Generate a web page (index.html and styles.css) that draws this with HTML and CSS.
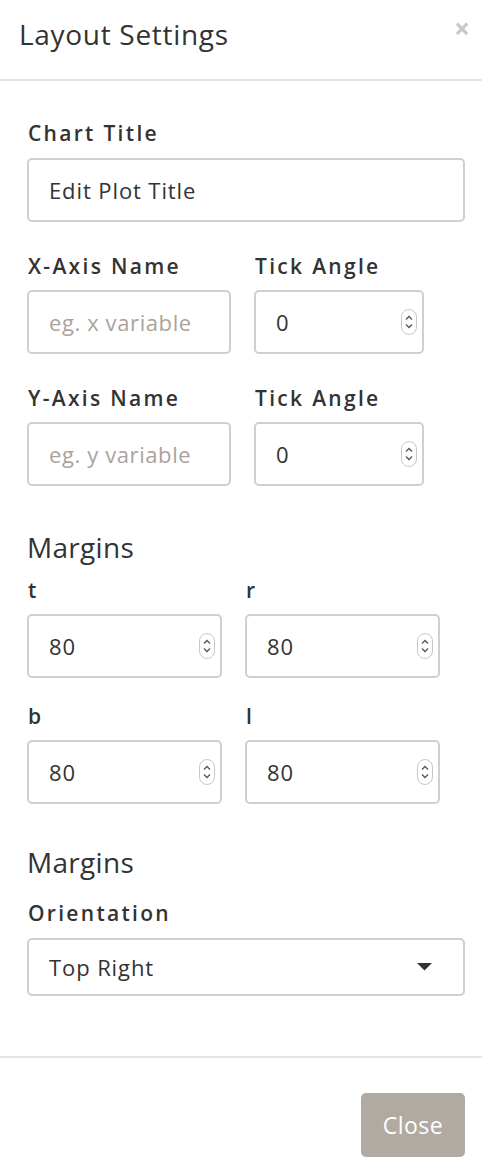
FILE: index.html
```html
<!DOCTYPE html>
<html>
<head>
<meta charset="utf-8">
<link rel="stylesheet" href="styles.css">
</head>
<body>
<div class="modal">
  <div class="header">
    <h1 class="title">Layout Settings</h1>
    <span class="close-x">&times;</span>
  </div>
  <div class="body">
    <div class="group">
      <label class="label">Chart Title</label>
      <div class="box"><span class="value">Edit Plot Title</span></div>
    </div>

    <div class="row">
      <div class="group col-name">
        <label class="label">X-Axis Name</label>
        <div class="box"><span class="placeholder">eg. x variable</span></div>
      </div>
      <div class="group col-angle">
        <label class="label">Tick Angle</label>
        <div class="box num"><span class="value">0</span>
          <svg class="spin" width="16" height="26" viewBox="0 0 16 26"><rect x="0.5" y="0.5" width="15" height="25" rx="7.5" fill="#fff" stroke="#c8c8c8"/><path d="M5 10.5 L8 7.5 L11 10.5" fill="none" stroke="#555" stroke-width="1.3"/><path d="M5 15.5 L8 18.5 L11 15.5" fill="none" stroke="#555" stroke-width="1.3"/></svg>
        </div>
      </div>
    </div>

    <div class="row">
      <div class="group col-name">
        <label class="label">Y-Axis Name</label>
        <div class="box"><span class="placeholder">eg. y variable</span></div>
      </div>
      <div class="group col-angle">
        <label class="label">Tick Angle</label>
        <div class="box num"><span class="value">0</span>
          <svg class="spin" width="16" height="26" viewBox="0 0 16 26"><rect x="0.5" y="0.5" width="15" height="25" rx="7.5" fill="#fff" stroke="#c8c8c8"/><path d="M5 10.5 L8 7.5 L11 10.5" fill="none" stroke="#555" stroke-width="1.3"/><path d="M5 15.5 L8 18.5 L11 15.5" fill="none" stroke="#555" stroke-width="1.3"/></svg>
        </div>
      </div>
    </div>

    <h2 class="section">Margins</h2>
    <div class="row margins">
      <div class="group col-half">
        <label class="label">t</label>
        <div class="box num"><span class="value">80</span>
          <svg class="spin" width="16" height="26" viewBox="0 0 16 26"><rect x="0.5" y="0.5" width="15" height="25" rx="7.5" fill="#fff" stroke="#c8c8c8"/><path d="M5 10.5 L8 7.5 L11 10.5" fill="none" stroke="#555" stroke-width="1.3"/><path d="M5 15.5 L8 18.5 L11 15.5" fill="none" stroke="#555" stroke-width="1.3"/></svg>
        </div>
      </div>
      <div class="group col-half">
        <label class="label">r</label>
        <div class="box num"><span class="value">80</span>
          <svg class="spin" width="16" height="26" viewBox="0 0 16 26"><rect x="0.5" y="0.5" width="15" height="25" rx="7.5" fill="#fff" stroke="#c8c8c8"/><path d="M5 10.5 L8 7.5 L11 10.5" fill="none" stroke="#555" stroke-width="1.3"/><path d="M5 15.5 L8 18.5 L11 15.5" fill="none" stroke="#555" stroke-width="1.3"/></svg>
        </div>
      </div>
    </div>
    <div class="row margins">
      <div class="group col-half">
        <label class="label">b</label>
        <div class="box num"><span class="value">80</span>
          <svg class="spin" width="16" height="26" viewBox="0 0 16 26"><rect x="0.5" y="0.5" width="15" height="25" rx="7.5" fill="#fff" stroke="#c8c8c8"/><path d="M5 10.5 L8 7.5 L11 10.5" fill="none" stroke="#555" stroke-width="1.3"/><path d="M5 15.5 L8 18.5 L11 15.5" fill="none" stroke="#555" stroke-width="1.3"/></svg>
        </div>
      </div>
      <div class="group col-half">
        <label class="label">l</label>
        <div class="box num"><span class="value">80</span>
          <svg class="spin" width="16" height="26" viewBox="0 0 16 26"><rect x="0.5" y="0.5" width="15" height="25" rx="7.5" fill="#fff" stroke="#c8c8c8"/><path d="M5 10.5 L8 7.5 L11 10.5" fill="none" stroke="#555" stroke-width="1.3"/><path d="M5 15.5 L8 18.5 L11 15.5" fill="none" stroke="#555" stroke-width="1.3"/></svg>
        </div>
      </div>
    </div>

    <h2 class="section section-2">Margins</h2>
    <div class="group">
      <label class="label">Orientation</label>
      <div class="box select"><span class="value">Top Right</span>
        <svg class="caret" width="15" height="8" viewBox="0 0 15 8"><path d="M0 0 H15 L7.5 7.5 Z" fill="#333"/></svg>
      </div>
    </div>
  </div>
  <div class="footer">
    <button class="btn-close">Close</button>
  </div>
</div>
</body>
</html>
```

FILE: styles.css
```css
* { box-sizing: border-box; }
html, body { margin: 0; padding: 0; background: #fff; }
body {
  font-family: "Open Sans", "Noto Sans", "DejaVu Sans", sans-serif;
  color: #333;
}
.modal { width: 482px; height: 1170px; background: #fff; }
.header {
  height: 81px;
  border-bottom: 2px solid #e5e5e5;
  display: flex;
  align-items: flex-start;
  justify-content: space-between;
  padding: 0 12px 0 19px;
}
.title {
  margin: 16px 0 0;
  font-size: 28px;
  font-weight: 400;
  letter-spacing: 0.7px;
  line-height: 36px;
  color: #333;
}
.close-x {
  margin-top: 10px;
  font-size: 28px;
  line-height: 36px;
  font-weight: 700;
  color: #c8c8c8;
}
.body { padding: 38px 17px 0 27px; }
.group { display: flex; flex-direction: column; }
.label {
  font-size: 21px;
  font-weight: 600;
  letter-spacing: 2.3px;
  line-height: 28px;
  padding-left: 1px;
  margin-bottom: 11px;
  color: #333;
}
.box {
  height: 64px;
  border: 2px solid #cfcfcf;
  border-radius: 5px;
  display: flex;
  align-items: center;
  padding: 0 20px;
  font-size: 22px;
  letter-spacing: 0.9px;
}
.value { color: #333; }
.placeholder { color: #aaa39c; letter-spacing: 0.6px; }
.row { display: flex; gap: 23px; margin-top: 30px; }
.row .label { margin-bottom: 10px; }
.col-name { width: 204px; }
.col-angle { width: 170px; }
.num { justify-content: space-between; padding-right: 5px; }
.spin { display: block; }
.section {
  margin: 43px 0 0;
  font-size: 28px;
  font-weight: 400;
  letter-spacing: 0.3px;
  line-height: 36px;
  color: #333;
}
.row.margins { margin-top: 11px; gap: 23px; }
.row.margins + .row.margins { margin-top: 24px; }
.col-half { width: 195px; }
.margins .label { margin-bottom: 10px; }
.section-2 { margin-top: 40px; }
.section-2 + .group { margin-top: 19px; }
.select { height: 58px; justify-content: space-between; padding-right: 31px; }
.caret { display: block; }
.footer {
  margin-top: 60px;
  border-top: 2px solid #e5e5e5;
  padding: 35px 17px 0 0;
  display: flex;
  justify-content: flex-end;
}
.btn-close {
  width: 104px;
  height: 64px;
  border: none;
  border-radius: 5px;
  background: #b1aaa3;
  color: #fff;
  font-family: inherit;
  font-size: 23px;
  letter-spacing: 0.5px;
}
```
